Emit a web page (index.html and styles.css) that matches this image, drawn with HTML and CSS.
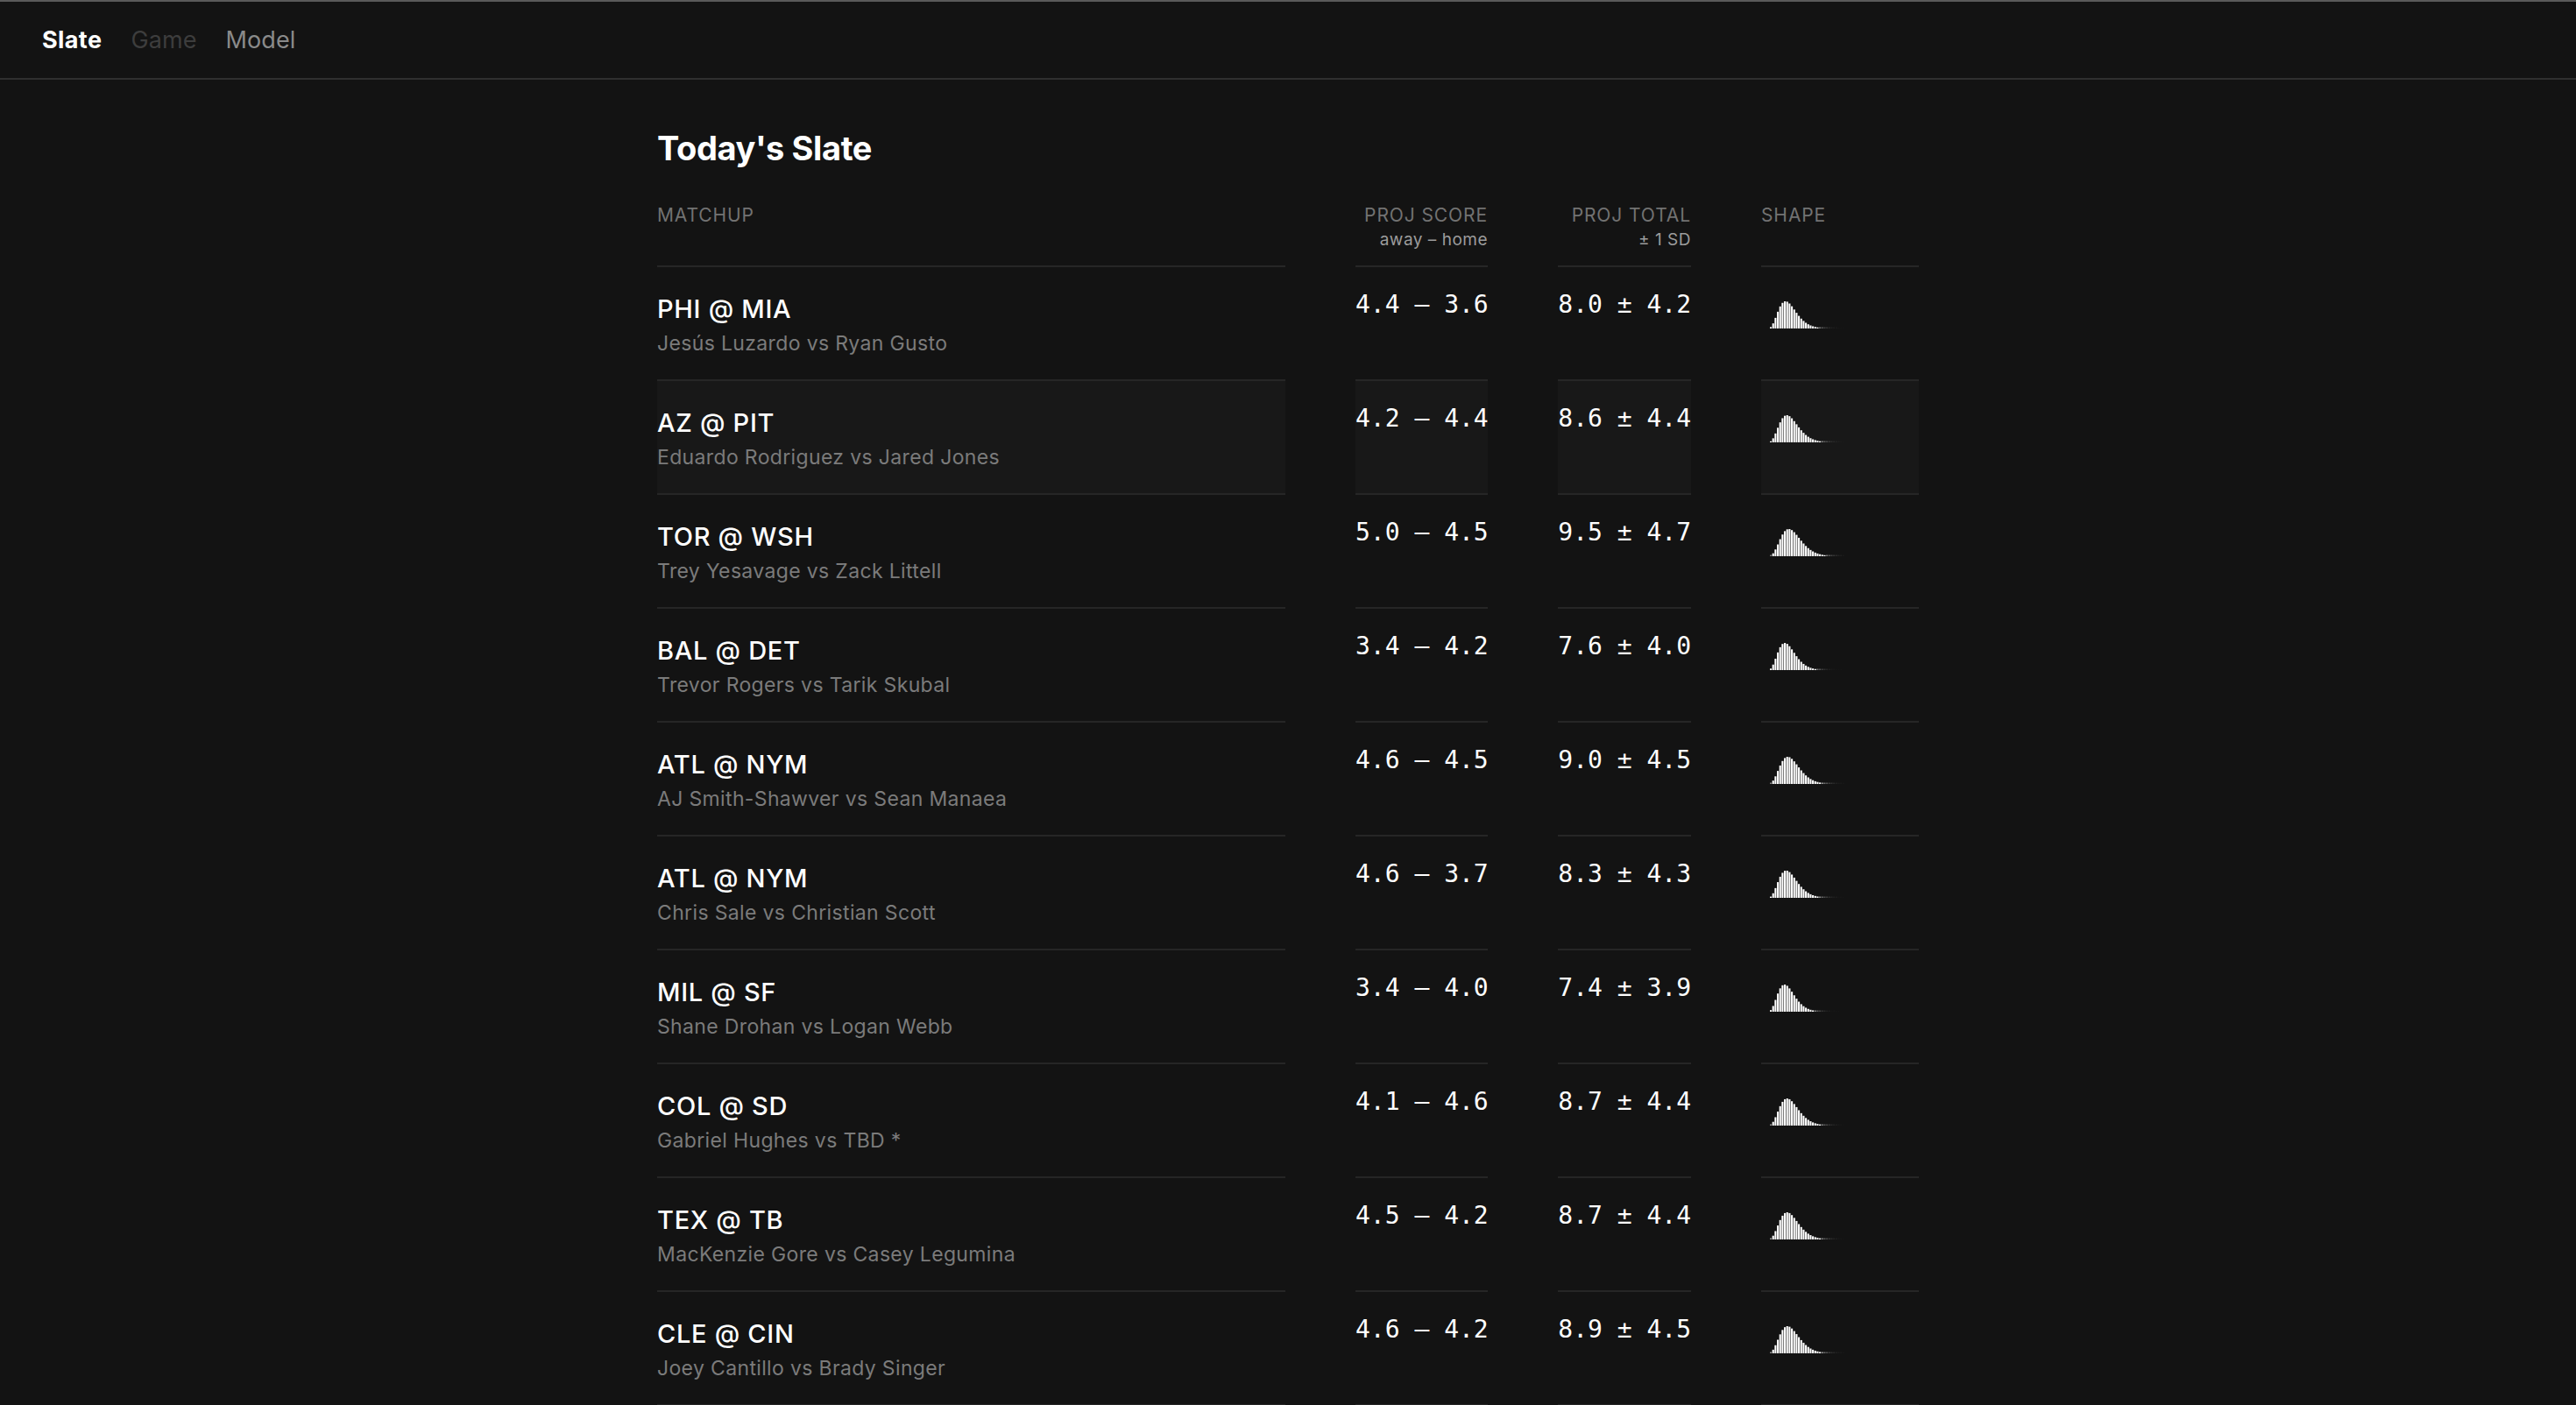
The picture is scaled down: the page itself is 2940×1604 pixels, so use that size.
FILE: index.html
```html
<!DOCTYPE html>
<html lang="en">
<head>
    <meta charset="UTF-8">
    <meta name="viewport" content="width=device-width, initial-scale=1.0">
    <title>Today's Slate</title>
    <link rel="stylesheet" href="styles.css">
</head>
<body>
    <nav class="topbar">
        <a class="nav-link active" href="#">Slate</a>
        <a class="nav-link disabled" href="#">Game</a>
        <a class="nav-link" href="#">Model</a>
    </nav>

    <main class="slate">
        <h1>Today's Slate</h1>

        <div class="slate-row slate-head">
            <div class="cell">
                <div class="col-label">MATCHUP</div>
            </div>
            <div class="cell right">
                <div class="col-label">PROJ SCORE</div>
                <div class="col-sub">away – home</div>
            </div>
            <div class="cell right">
                <div class="col-label">PROJ TOTAL</div>
                <div class="col-sub">± 1 SD</div>
            </div>
            <div class="cell">
                <div class="col-label">SHAPE</div>
            </div>
        </div>

        <div class="slate-row">
            <div class="cell matchup">
                <div class="teams">PHI @ MIA</div>
                <div class="pitchers">Jesús Luzardo vs Ryan Gusto</div>
            </div>
            <div class="cell num">4.4 – 3.6</div>
            <div class="cell num">8.0 ± 4.2</div>
            <div class="cell shape"><svg class="spark" data-mean="8.0" data-sd="4.2"></svg></div>
        </div>

        <div class="slate-row hover">
            <div class="cell matchup">
                <div class="teams">AZ @ PIT</div>
                <div class="pitchers">Eduardo Rodriguez vs Jared Jones</div>
            </div>
            <div class="cell num">4.2 – 4.4</div>
            <div class="cell num">8.6 ± 4.4</div>
            <div class="cell shape"><svg class="spark" data-mean="8.6" data-sd="4.4"></svg></div>
        </div>

        <div class="slate-row">
            <div class="cell matchup">
                <div class="teams">TOR @ WSH</div>
                <div class="pitchers">Trey Yesavage vs Zack Littell</div>
            </div>
            <div class="cell num">5.0 – 4.5</div>
            <div class="cell num">9.5 ± 4.7</div>
            <div class="cell shape"><svg class="spark" data-mean="9.5" data-sd="4.7"></svg></div>
        </div>

        <div class="slate-row">
            <div class="cell matchup">
                <div class="teams">BAL @ DET</div>
                <div class="pitchers">Trevor Rogers vs Tarik Skubal</div>
            </div>
            <div class="cell num">3.4 – 4.2</div>
            <div class="cell num">7.6 ± 4.0</div>
            <div class="cell shape"><svg class="spark" data-mean="7.6" data-sd="4.0"></svg></div>
        </div>

        <div class="slate-row">
            <div class="cell matchup">
                <div class="teams">ATL @ NYM</div>
                <div class="pitchers">AJ Smith-Shawver vs Sean Manaea</div>
            </div>
            <div class="cell num">4.6 – 4.5</div>
            <div class="cell num">9.0 ± 4.5</div>
            <div class="cell shape"><svg class="spark" data-mean="9.0" data-sd="4.5"></svg></div>
        </div>

        <div class="slate-row">
            <div class="cell matchup">
                <div class="teams">ATL @ NYM</div>
                <div class="pitchers">Chris Sale vs Christian Scott</div>
            </div>
            <div class="cell num">4.6 – 3.7</div>
            <div class="cell num">8.3 ± 4.3</div>
            <div class="cell shape"><svg class="spark" data-mean="8.3" data-sd="4.3"></svg></div>
        </div>

        <div class="slate-row">
            <div class="cell matchup">
                <div class="teams">MIL @ SF</div>
                <div class="pitchers">Shane Drohan vs Logan Webb</div>
            </div>
            <div class="cell num">3.4 – 4.0</div>
            <div class="cell num">7.4 ± 3.9</div>
            <div class="cell shape"><svg class="spark" data-mean="7.4" data-sd="3.9"></svg></div>
        </div>

        <div class="slate-row">
            <div class="cell matchup">
                <div class="teams">COL @ SD</div>
                <div class="pitchers">Gabriel Hughes vs TBD *</div>
            </div>
            <div class="cell num">4.1 – 4.6</div>
            <div class="cell num">8.7 ± 4.4</div>
            <div class="cell shape"><svg class="spark" data-mean="8.7" data-sd="4.4"></svg></div>
        </div>

        <div class="slate-row">
            <div class="cell matchup">
                <div class="teams">TEX @ TB</div>
                <div class="pitchers">MacKenzie Gore vs Casey Legumina</div>
            </div>
            <div class="cell num">4.5 – 4.2</div>
            <div class="cell num">8.7 ± 4.4</div>
            <div class="cell shape"><svg class="spark" data-mean="8.7" data-sd="4.4"></svg></div>
        </div>

        <div class="slate-row">
            <div class="cell matchup">
                <div class="teams">CLE @ CIN</div>
                <div class="pitchers">Joey Cantillo vs Brady Singer</div>
            </div>
            <div class="cell num">4.6 – 4.2</div>
            <div class="cell num">8.9 ± 4.5</div>
            <div class="cell shape"><svg class="spark" data-mean="8.9" data-sd="4.5"></svg></div>
        </div>
    </main>

    <script>
        // draw the run-total histogram for each game (negative binomial fit from mean / sd)
        const BINS = 32;
        const STEP = 2.67;
        const HEIGHT = 32;

        function pmf(mean, sd) {
            const v = sd * sd;
            const p = mean / v;
            const r = mean * mean / (v - mean);
            const out = [Math.pow(p, r)];
            for (let k = 1; k < BINS; k++) {
                out.push(out[k - 1] * (k - 1 + r) / k * (1 - p));
            }
            return out;
        }

        document.querySelectorAll('.spark').forEach(svg => {
            const probs = pmf(parseFloat(svg.dataset.mean), parseFloat(svg.dataset.sd));
            const max = Math.max(...probs);
            const w = BINS * STEP;
            svg.setAttribute('width', w);
            svg.setAttribute('height', HEIGHT);
            svg.setAttribute('viewBox', `0 0 ${w} ${HEIGHT}`);

            let bars = '';
            probs.forEach((pr, i) => {
                const h = pr / max * (HEIGHT - 1);
                const x = (i * STEP).toFixed(2);
                if (h >= 1.2) {
                    bars += `<rect x="${x}" y="${(HEIGHT - h).toFixed(2)}" width="2.1" height="${h.toFixed(2)}" />`;
                } else {
                    // tail bins fade out instead of shrinking further
                    const op = (h * 0.5).toFixed(2);
                    bars += `<rect x="${x}" y="${HEIGHT - 1.5}" width="2.1" height="1.5" opacity="${op}" />`;
                }
            });
            svg.innerHTML = bars;
        });
    </script>
</body>
</html>
```

FILE: styles.css
```css
:root {
    --bg: #131313;
    --row-hover: #181818;
    --line: #262626;
    --text: #ffffff;
    --muted: #7b7b7b;
    --label: #727272;
    --sub: #9c9c9c;
}

body {
    margin: 0;
    background-color: var(--bg);
    color: var(--text);
    font-family: 'Inter', 'Helvetica Neue', sans-serif;
}

.topbar {
    display: flex;
    gap: 33px;
    padding: 28px 48px 27px;
    border-top: 2px solid #5a5a5a;
    border-bottom: 2px solid #2f2f2f;
}

.nav-link {
    font-size: 27px;
    line-height: 32px;
    color: #8a8a8a;
    text-decoration: none;
    letter-spacing: 0.1px;
}

.nav-link.active {
    color: var(--text);
    font-weight: 700;
    letter-spacing: 0.4px;
}

.nav-link.disabled {
    color: #3d3d3d;
}

.slate {
    max-width: 1440px;
    margin: 0 auto;
    padding-bottom: 80px;
}

h1 {
    margin: 55px 0 41px;
    font-size: 38px;
    line-height: 46px;
    font-weight: 700;
    letter-spacing: -0.4px;
}

.slate-row {
    display: grid;
    grid-template-columns: 1fr 151px 152px 180px;
    column-gap: 80px;
}

.cell {
    border-bottom: 2px solid var(--line);
}

.right {
    text-align: right;
}

.slate-head .cell {
    padding-bottom: 16px;
}

.col-label {
    font-size: 21px;
    line-height: 26px;
    color: var(--label);
    letter-spacing: 0.9px;
}

.col-sub {
    margin-top: 2px;
    font-size: 19px;
    line-height: 26px;
    color: var(--sub);
    letter-spacing: 0.5px;
}

.slate-row .matchup {
    padding: 30px 0 26px;
}

.teams {
    font-size: 29px;
    line-height: 36px;
    font-weight: 500;
    letter-spacing: 0.7px;
}

.pitchers {
    margin-top: 6px;
    font-size: 23px;
    line-height: 30px;
    color: var(--muted);
    letter-spacing: 0.35px;
}

.num {
    padding-top: 27px;
    font-family: 'DejaVu Sans Mono', monospace;
    font-size: 28px;
    line-height: 32px;
    text-align: right;
    white-space: nowrap;
}

.shape {
    padding: 38px 0 0 10px;
}

.spark {
    display: block;
    fill: #ffffff;
}

.slate-row.hover .cell {
    background-color: var(--row-hover);
}
```
